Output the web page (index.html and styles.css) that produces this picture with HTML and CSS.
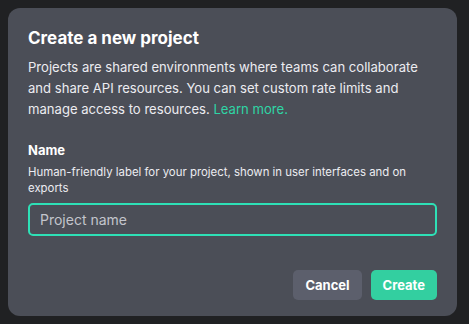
FILE: index.html
```html
<!DOCTYPE html>
<html lang="en">
<head>
    <meta charset="UTF-8">
    <title>Create a new project</title>
    <link rel="stylesheet" href="styles.css">
</head>
<body>
    <div class="dialog">
        <h1 class="title">Create a new project</h1>
        <p class="desc">Projects are shared environments where teams can collaborate and share API resources. You can set custom rate limits and manage access to resources. <a href="#" class="link">Learn more.</a></p>
        <label class="field-label" for="pname">Name</label>
        <p class="hint">Human-friendly label for your project, shown in user interfaces and on exports</p>
        <input id="pname" class="input" type="text" placeholder="Project name" autofocus>
        <div class="actions">
            <button class="btn btn-cancel">Cancel</button>
            <button class="btn btn-create">Create</button>
        </div>
    </div>
</body>
</html>
```

FILE: styles.css
```css
body {
    margin: 0;
    background: #202123;
    font-family: Inter, "Noto Sans", sans-serif;
    color: #ececf1;
}

.dialog {
    margin: 8px;
    width: 449px;
    height: 308px;
    box-sizing: border-box;
    padding: 19px 20px 16px;
    background: #4b4e57;
    border-radius: 12px;
    display: flex;
    flex-direction: column;
}

.title {
    margin: 0;
    font-size: 17px;
    font-weight: 700;
    color: #fff;
    line-height: 22px;
}

.desc {
    margin: 8px 0 0;
    font-size: 13.1px;
    line-height: 21px;
}

.link {
    color: #2fd5a5;
    text-decoration: none;
}

.field-label {
    margin-top: 22px;
    font-size: 13px;
    font-weight: 700;
    color: #fff;
}

.hint {
    margin: 6px 0 0;
    font-size: 11.4px;
    line-height: 16px;
}

.input {
    margin-top: 7px;
    height: 33px;
    box-sizing: border-box;
    border: 2px solid #2ee0b6;
    border-radius: 5px;
    background: transparent;
    padding: 0 10px;
    font-family: inherit;
    font-size: 14px;
    color: #fff;
    outline: none;
}

.input::placeholder {
    color: #c3c5cc;
}

.actions {
    margin-top: auto;
    display: flex;
    justify-content: flex-end;
    gap: 9px;
}

.btn {
    height: 30px;
    border: none;
    border-radius: 5px;
    padding: 0 12px;
    font-family: inherit;
    font-size: 13px;
    font-weight: 700;
    color: #fff;
    cursor: pointer;
}

.btn-cancel {
    background: #5c5f6c;
}

.btn-create {
    background: #33cfa0;
}
```
